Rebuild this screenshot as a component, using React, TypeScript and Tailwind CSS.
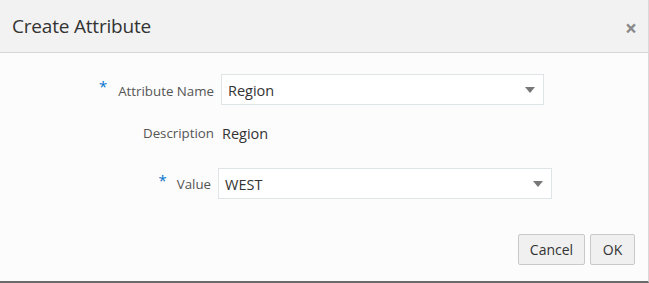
export default function App() {
  return (
    <div className="w-[649px] h-[283px] flex flex-col bg-[#fcfcfc] border-r border-r-[#d9d9d9] border-b-2 border-b-[#6b6b6b] font-['Open_Sans',sans-serif] text-[#333]">
      <div className="h-[53px] shrink-0 flex items-center justify-between bg-[#f2f2f2] border-b border-[#d6d6d6] pl-[12px] pr-[11px]">
        <h1 className="text-[19px] text-[#333] tracking-[-0.2px]">Create Attribute</h1>
        <span className="text-[#8a8a8a] text-[21px] font-bold leading-none relative top-[2px]">×</span>
      </div>

      <div className="flex-1 flex flex-col">
        <div className="flex items-center mt-[21px] h-[31px]">
          <div className="w-[214px] flex justify-end items-center">
            <span className="text-[#0572ce] text-[15px] mr-[11px] relative top-[-3px]">*</span>
            <span className="text-[13.3px] text-[#555] relative top-[2px]">Attribute Name</span>
          </div>
          <div className="ml-[7px] w-[323px] h-[31px] flex items-center justify-between bg-white border border-[#dfe4e7] pl-[6px] pr-[8px]">
            <span className="text-[14.5px] relative top-[1px]">Region</span>
            <svg width="10" height="6" viewBox="0 0 10 6"><path d="M0 0h10L5 6z" fill="#777" /></svg>
          </div>
        </div>

        <div className="flex items-center mt-[16px] h-[24px]">
          <div className="w-[214px] flex justify-end">
            <span className="text-[13.3px] text-[#555] relative top-[1px]">Description</span>
          </div>
          <span className="ml-[8px] text-[14.5px] relative top-[1px]">Region</span>
        </div>

        <div className="flex items-center mt-[23px] h-[31px]">
          <div className="w-[211px] flex justify-end items-center">
            <span className="text-[#0572ce] text-[15px] mr-[10px] relative top-[-3px]">*</span>
            <span className="text-[13.3px] text-[#555] relative top-[1px]">Value</span>
          </div>
          <div className="ml-[7px] w-[334px] h-[31px] flex items-center justify-between bg-white border border-[#dfe4e7] pl-[6px] pr-[8px]">
            <span className="text-[14.5px] relative top-[1px]">WEST</span>
            <svg width="10" height="6" viewBox="0 0 10 6"><path d="M0 0h10L5 6z" fill="#777" /></svg>
          </div>
        </div>

        <div className="flex justify-end gap-[5px] mt-[35px] pr-[13px]">
          <button className="w-[67px] h-[31px] bg-[#f0f0f0] border border-[#c9c9c9] rounded-[2px] text-[14px] text-[#333]">Cancel</button>
          <button className="w-[45px] h-[31px] bg-[#f0f0f0] border border-[#c9c9c9] rounded-[2px] text-[14px] text-[#333]">OK</button>
        </div>
      </div>
    </div>
  );
}
